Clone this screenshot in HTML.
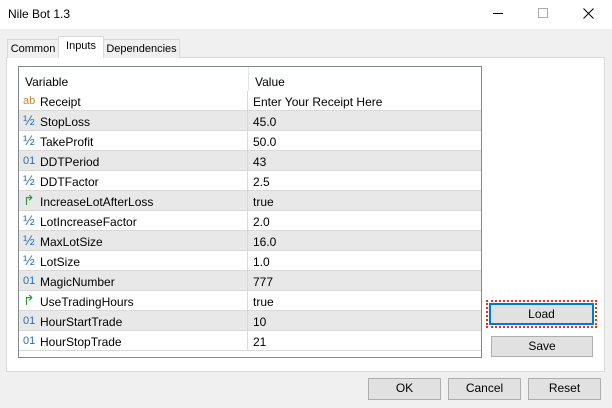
<!DOCTYPE html><html><head><style>
*{margin:0;padding:0;box-sizing:border-box}
body{width:612px;height:408px;background:#f0f0f0;font-family:"Liberation Sans",sans-serif;font-size:12px;color:#000;position:relative;overflow:hidden}
.a{position:absolute}
.row{position:absolute;left:1px;width:462px;height:20px;border-bottom:1px solid #d9d9d9}
.row span{position:absolute;top:4px}
.btn{position:absolute;background:#e1e1e1;border:1px solid #adadad;text-align:center;line-height:19px}
.ic{position:absolute;left:4px;top:3px;font-size:11px;width:14px}
.tab{position:absolute;background:#f0f0f0;border:1px solid #d9d9d9;border-bottom:none;text-align:center;font-size:11px;white-space:nowrap}
</style></head><body>
<div class="a" style="left:0;top:0;width:612px;height:29px;background:#fff"></div>
<div class="a" style="left:8px;top:7px;font-size:12px">Nile Bot 1.3</div>
<div class="a" style="left:493px;top:13px;width:10px;height:1px;background:#000"></div>
<div class="a" style="left:538px;top:8px;width:10px;height:10px;border:1px solid #aaa"></div>
<svg class="a" style="left:583px;top:8px" width="11" height="11"><path d="M0.5 0.5L10.5 10.5M10.5 0.5L0.5 10.5" stroke="#000" stroke-width="1"/></svg>
<div class="a" style="left:6px;top:57px;width:599px;height:315px;background:#fff;border:1px solid #d9d9d9"></div>
<div class="tab" style="left:7px;top:39px;width:52px;height:19px;padding-top:3px">Common</div>
<div class="tab" style="left:103px;top:39px;width:77px;height:19px;padding-top:3px">Dependencies</div>
<div class="tab" style="left:58px;top:36px;width:46px;height:22px;background:#fff;padding-top:3px">Inputs</div>
<div class="a" style="left:18px;top:66px;width:464px;height:292px;border:1px solid #828790;background:#fff">
<span class="a" style="left:6px;top:8px">Variable</span><span class="a" style="left:236px;top:8px">Value</span>
<div class="a" style="left:229px;top:0;width:1px;height:24px;background:#e5e5e5"></div>
</div>
<div id="t" class="a" style="left:18px;top:91px"></div>
<script>
var d=[["ab","Receipt","Enter Your Receipt Here","#c08a30"],["½","StopLoss","45.0"],["½","TakeProfit","50.0"],["01","DDTPeriod","43"],["½","DDTFactor","2.5"],["↱","IncreaseLotAfterLoss","true"],["½","LotIncreaseFactor","2.0"],["½","MaxLotSize","16.0"],["½","LotSize","1.0"],["01","MagicNumber","777"],["↱","UseTradingHours","true"],["01","HourStartTrade","10"],["01","HourStopTrade","21"]];
var h="";d.forEach(function(r,i){var c=r[3]||(r[0]=="↱"?"#2a9a3a":"#2a6fb0");
h+='<div class="row" style="top:'+(i*20)+'px;background:'+(i%2?'#e8e8e8':'#fff')+'"><span class="ic" style="color:'+c+';'+(r[0]=="½"?'font-size:14px;top:1px':'')+(r[0]=="↱"?'font-size:14px;top:1px':'')+'">'+r[0]+'</span><span style="left:21px">'+r[1]+'</span><span style="left:234px">'+r[2]+'</span></div>';});
document.getElementById("t").innerHTML=h;
</script>
<div class="a" style="left:247px;top:91px;width:1px;height:260px;background:#d9d9d9"></div>
<div class="a" style="left:486px;top:300px;width:111px;height:28px;border:2px dotted #f03010"></div>
<div class="btn" style="left:489px;top:303px;width:105px;height:22px;border:2px solid #0078d7;line-height:18px">Load</div>
<div class="btn" style="left:491px;top:336px;width:102px;height:21px">Save</div>
<div class="btn" style="left:368px;top:378px;width:73px;height:22px">OK</div>
<div class="btn" style="left:448px;top:378px;width:73px;height:22px">Cancel</div>
<div class="btn" style="left:528px;top:378px;width:73px;height:22px">Reset</div>
</body></html>
